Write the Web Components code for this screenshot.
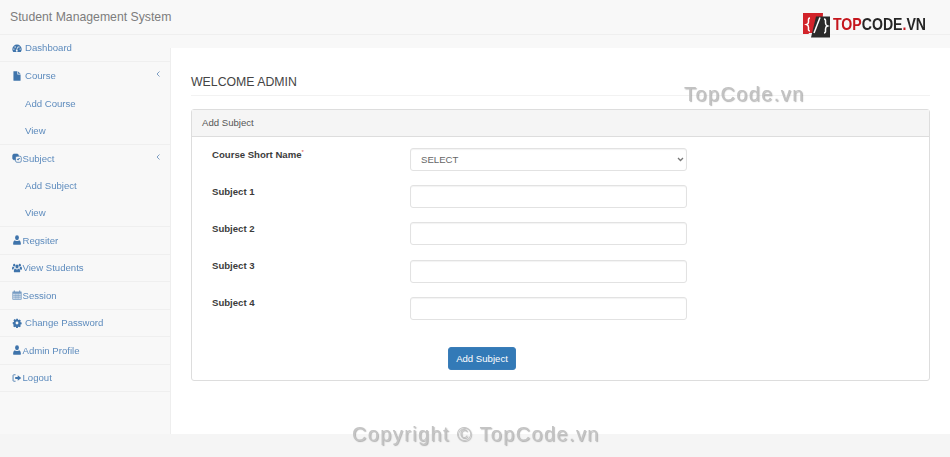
<!DOCTYPE html>
<html lang="en">
<head>
<meta charset="utf-8">
<title>Student Management System</title>
<style>
  html, body { margin: 0; height: 100%; }
  body {
    background: #f8f8f8;
    font-family: "Liberation Sans", Arial, sans-serif;
    font-size: 9.6px;
    color: #333;
    overflow: hidden;
  }
</style>
</head>
<body>
<admin-page>
  <top-bar slot="top" brand="Student Management System"></top-bar>
  <side-nav slot="side">
    <nav-item icon="dashboard" gap="wide" divider>Dashboard</nav-item>
    <nav-item icon="file" gap="wide" caret>Course</nav-item>
    <nav-item sub>Add Course</nav-item>
    <nav-item sub divider>View</nav-item>
    <nav-item icon="clone" caret>Subject</nav-item>
    <nav-item sub>Add Subject</nav-item>
    <nav-item sub divider>View</nav-item>
    <nav-item icon="user" divider>Regsiter</nav-item>
    <nav-item icon="users" divider>View Students</nav-item>
    <nav-item icon="calendar" divider>Session</nav-item>
    <nav-item icon="cog" gap="wide" divider>Change Password</nav-item>
    <nav-item icon="user" divider>Admin Profile</nav-item>
    <nav-item icon="logout" divider>Logout</nav-item>
  </side-nav>
  <form-panel slot="main" heading="WELCOME ADMIN" title="Add Subject">
    <form-row label="Course Short Name" required>
      <select>
        <option>SELECT</option>
      </select>
    </form-row>
    <form-row label="Subject 1"></form-row>
    <form-row label="Subject 2"></form-row>
    <form-row label="Subject 3"></form-row>
    <form-row label="Subject 4"></form-row>
  </form-panel>
</admin-page>

<script>
const ICONS = {
  dashboard: `<svg viewBox="0 0 16 14"><path d="M8 1.500a7.500 7.500 0 0 0-7.500 7.500c0 1.700.6 3.200 1.500 4.500h12c.9-1.300 1.500-2.800 1.500-4.500A7.500 7.500 0 0 0 8 1.500zM3 9.800a1.100 1.100 0 1 1 0-2.200 1.100 1.100 0 0 1 0 2.200zm2-3.300a1.100 1.100 0 1 1 0-2.200 1.100 1.100 0 0 1 0 2.200zm4.300 4.800a1.600 1.600 0 1 1-2.300-1.500l1.700-5 1 .3-1.500 5c.7.200 1.100.6 1.100 1.200zM13 9.800a1.100 1.100 0 1 1 0-2.200 1.100 1.100 0 0 1 0 2.200zm-2-3.300a1.100 1.100 0 1 1 0-2.200 1.100 1.100 0 0 1 0 2.200z" fill-rule="evenodd"/></svg>`,
  file: `<svg viewBox="0 0 14 14"><path d="M2 .5h5.500v4.300h4.500V13a.7.700 0 0 1-.7.700H2.700A.7.700 0 0 1 2 13zM8.500.6 12 3.900H8.500z"/></svg>`,
  clone: `<svg viewBox="0 0 14 14" fill="none" stroke="currentColor" stroke-width="1"><rect x="1" y="1.500" width="8" height="8" rx="2"/><rect x="5" y="4.500" width="8" height="8.500" rx="2" fill="#f8f8f8"/><path d="m7 8.500 1.500 1.500 2.500-3"/></svg>`,
  user: `<svg viewBox="0 0 14 14"><g transform="translate(1.400 0) scale(.8 1)"><circle cx="7" cy="3.800" r="3.400"/><path d="M1 13.500c-.5 0-.8-.3-.8-.8 0-3 1-5.200 3.200-5.500 1 .9 2.200 1.300 3.600 1.300s2.600-.4 3.600-1.300c2.200.3 3.200 2.500 3.200 5.500 0 .5-.3.800-.8.800z"/></g></svg>`,
  users: `<svg viewBox="0 0 18 14" preserveAspectRatio="none"><circle cx="9" cy="5" r="2.800"/><circle cx="4" cy="3" r="2"/><circle cx="14" cy="3" r="2"/><path d="M4 13c-.4 0-.7-.3-.7-.7 0-2.500.8-4.300 2.500-4.500.9.800 2 1.200 3.200 1.200s2.300-.4 3.200-1.200c1.700.2 2.500 2 2.500 4.500 0 .4-.3.700-.7.700zM.5 9c-.3 0-.5-.2-.5-.5 0-2 .6-3.500 1.800-3.600.5.500 1.200.8 1.900.8l.6 1.600C3.200 7 2.700 7.900 2.600 9zM17.500 9c.3 0 .5-.2.500-.5 0-2-.6-3.500-1.800-3.600-.5.500-1.200.8-1.900.8l-.6 1.600c1.100.7 1.600 1.600 1.700 2.700z"/></svg>`,
  calendar: `<svg viewBox="0 0 14 14"><path d="M1.200 2h1.300V.8h1.600V2h5.800V.8h1.600V2h1.300c.4 0 .7.300.7.700V13c0 .4-.3.700-.7.700H1.200c-.4 0-.7-.3-.7-.7V2.700c0-.4.300-.7.700-.7z" opacity=".7"/><path d="M1.700 5.200h10.600v7.300H1.700z" fill="#dfe7f0"/><path d="M4.500 5v7.500M7 5v7.500M9.500 5v7.500M1.700 7.600h10.600M1.700 10.100h10.600" stroke="currentColor" stroke-width=".8" opacity=".7"/></svg>`,
  cog: `<svg viewBox="0 0 14 14"><path fill-rule="evenodd" d="M5.800 1h2.400l.3 1.500 1 .4 1.300-.9 1.700 1.700-.9 1.300.4 1 1.500.3v2.400l-1.500.3-.4 1 .9 1.300-1.700 1.700-1.300-.9-1 .4-.3 1.500H5.800l-.3-1.500-1-.4-1.300.9-1.700-1.700.9-1.300-.4-1L1 8.200V5.800l1.500-.3.4-1-.9-1.300L3.700 1.500l1.300.9 1-.4zM7 5a2 2 0 1 0 0 4 2 2 0 0 0 0-4z"/></svg>`,
  logout: `<svg viewBox="0 0 14 14"><path d="M5 2.500H2.500a1 1 0 0 0-1 1v7a1 1 0 0 0 1 1H5" fill="none" stroke="currentColor" stroke-width="1.200"/><path d="M8 3.200 13 7l-5 3.800V8.500H4.500v-3H8z"/></svg>`,
};

const ARROW = `url("data:image/svg+xml,%3Csvg xmlns='http://www.w3.org/2000/svg' width='7' height='5'%3E%3Cpath d='M1 1l2.500 2.500L6 1' fill='none' stroke='%23777' stroke-width='1.300'/%3E%3C/svg%3E")`;

class AdminPage extends HTMLElement {
  connectedCallback() {
    if (this.shadowRoot) return;
    this.attachShadow({ mode: "open" });
    this.shadowRoot.innerHTML = `
      <style>
        :host { display: block; position: relative; width: 950px; height: 457px; overflow: hidden; }
        .wrap { display: flex; flex-direction: column; height: 100%; filter: blur(.5px); }
        .body { display: flex; }
        .side { flex: 0 0 170px; }
        .main { flex: 1; margin-top: 13.500px; height: 386px; background: #fff; border-left: 1px solid #eee; box-sizing: border-box; padding: 0 20px; }
        .foot { flex: 1; background: #f5f5f5; }
        .mark { position: absolute; white-space: nowrap; filter: blur(.3px); text-shadow: 1px 1px 1px rgba(110,110,110,.5); }
        .mark.one { left: 684px; top: 83px; font-size: 20px; letter-spacing: 1.400px; color: #c2c2c2; }
        .mark.two { left: 352px; top: 423px; font-size: 20px; letter-spacing: 1.360px; color: #c4c4c4; }
      </style>
      <div class="wrap">
        <slot name="top"></slot>
        <div class="body">
          <div class="side"><slot name="side"></slot></div>
          <div class="main"><slot name="main"></slot></div>
        </div>
        <div class="foot"></div>
      </div>
      <div class="mark one">TopCode.vn</div>
      <div class="mark two">Copyright © TopCode.vn</div>
    `;
  }
}

class TopBar extends HTMLElement {
  connectedCallback() {
    if (this.shadowRoot) return;
    this.attachShadow({ mode: "open" });
    this.shadowRoot.innerHTML = `
      <style>
        :host { display: flex; align-items: flex-start; justify-content: space-between; height: 34.500px; box-sizing: border-box; padding: 10px 0 0 10px; background: #f8f8f8; border-bottom: 1px solid #efefef; }
        .brand { font-size: 12.250px; line-height: 14px; color: #7d7d7d; }
        .logo { display: flex; align-items: flex-start; width: 147px; height: 26px; margin-top: 2px; }
        svg { display: block; flex: 0 0 auto; }
        .word { margin: 3px 0 0 3px; font-size: 16.500px; line-height: 19px; font-weight: 700; color: #262626; white-space: nowrap; transform: scaleX(.855); transform-origin: left; width: 93px; }
        .red { color: #c5161d; }
      </style>
      <span class="brand">${this.getAttribute("brand")}</span>
      <div class="logo">
        <svg width="27" height="26" viewBox="0 0 27 26">
          <path d="M0 1h20l-1 20H6l-.5 1H0z" fill="#d2232a"/>
          <path d="M13 4.500h14V25.500H8z" fill="#2b2b2b"/>
          <path d="M7 6C5 6 5.500 8 5.500 10S5 12 3.500 12.500C5 13 5.500 13.500 5.500 15.500S5 19 7 19" fill="none" stroke="#fff" stroke-width="1.500"/>
          <path d="M21 7c2 0 1.500 2 1.500 4s.5 2.500 2 3c-1.500.5-2 1-2 3s.5 4-1.500 4" fill="none" stroke="#fff" stroke-width="1.500"/>
          <path d="M17 5.500 11 21" stroke="#fff" stroke-width="1.500"/>
        </svg>
        <span class="word"><span class="red">TOP</span>CODE<span class="red">.</span>VN</span>
      </div>
    `;
  }
}

class SideNav extends HTMLElement {
  connectedCallback() {
    if (this.shadowRoot) return;
    this.attachShadow({ mode: "open" });
    this.shadowRoot.innerHTML = `
      <style>:host { display: block; }</style>
      <slot></slot>
    `;
  }
}

class NavItem extends HTMLElement {
  connectedCallback() {
    if (this.shadowRoot) return;
    this.attachShadow({ mode: "open" });
    const icon = this.getAttribute("icon");
    const wide = this.getAttribute("gap") === "wide";
    this.shadowRoot.innerHTML = `
      <style>
        :host { display: flex; align-items: center; position: relative; height: 27.500px; box-sizing: border-box; padding-left: ${this.hasAttribute("sub") ? 25 : 11.500}px; color: #5d8bbd; font-size: 9.600px; }
        :host([divider]) { border-bottom: 1px solid #efefef; }
        .icon { flex: 0 0 auto; width: ${wide ? 13.500 : 11}px; height: 10px; color: #3f74ab; display: block; }
        svg { display: block; height: 10px; width: 10px; fill: currentColor; }
        .caret { position: absolute; right: 10px; top: 9px; width: 4px; height: 6px; fill: none; stroke: #7f9fc4; stroke-width: 1; }
      </style>
      ${icon ? `<span class="icon">${ICONS[icon]}</span>` : ""}
      <slot></slot>
      ${this.hasAttribute("caret") ? `<svg class="caret" viewBox="0 0 4 6"><path d="M3.500.5 1 3l2.500 2.500"/></svg>` : ""}
    `;
  }
}

class FormPanel extends HTMLElement {
  connectedCallback() {
    if (this.shadowRoot) return;
    this.attachShadow({ mode: "open" });
    this.shadowRoot.innerHTML = `
      <style>
        :host { display: block; }
        h1 { margin: 0; padding: 27px 0 5px; height: 15px; box-sizing: content-box; font-size: 12.300px; line-height: 15px; font-weight: 400; color: #444; border-bottom: 1px solid #f2f2f2; }
        .panel { margin-top: 13px; height: 272px; box-sizing: border-box; border: 1px solid #ddd; border-radius: 3px; }
        .title { height: 27px; box-sizing: border-box; padding: 0 0 1px 10px; display: flex; align-items: center; background: #f5f5f5; border-bottom: 1px solid #ddd; font-size: 9.600px; color: #555; }
        .rows { display: flex; flex-direction: column; gap: 14.200px; padding: 11px 0 0 20px; }
        .actions { padding: 27px 0 0 256px; }
        button { width: 68px; height: 23px; padding: 0; border: 1px solid #3a7db8; border-radius: 3px; background: #337ab7; color: #fff; font: 9.600px "Liberation Sans", Arial, sans-serif; }
      </style>
      <h1>${this.getAttribute("heading")}</h1>
      <div class="panel">
        <div class="title">${this.getAttribute("title")}</div>
        <div class="rows"><slot></slot></div>
        <div class="actions"><button type="button">Add Subject</button></div>
      </div>
    `;
  }
}

class FormRow extends HTMLElement {
  connectedCallback() {
    if (this.shadowRoot) return;
    this.attachShadow({ mode: "open" });
    // the course row passes its own select, the others just get a text input
    const hasControl = this.children.length > 0;
    this.shadowRoot.innerHTML = `
      <style>
        :host { display: grid; grid-template-columns: 198px 277px; height: 23px; }
        label { font-size: 9.600px; font-weight: 700; color: #3c3c3c; line-height: 11px; padding-top: .6px; }
        sup { color: #d9534f; font-size: 6px; line-height: 0; font-weight: 400; }
        input, ::slotted(select) { box-sizing: border-box; width: 277px; height: 23px; margin: 0; background: #fff; border: 1px solid #e2e2e2; border-radius: 3px; box-shadow: inset 0 1px 1px rgba(0,0,0,.05); font: 9.600px "Liberation Sans", Arial, sans-serif; color: #666; padding: 0 10px 1px; }
        ::slotted(select) { appearance: none; background: #fff ${ARROW} no-repeat right 2.500px center; }
      </style>
      <label>${this.getAttribute("label")}${this.hasAttribute("required") ? "<sup>*</sup>" : ""}</label>
      ${hasControl ? "<slot></slot>" : "<input type='text'>"}
    `;
  }
}

customElements.define("admin-page", AdminPage);
customElements.define("top-bar", TopBar);
customElements.define("side-nav", SideNav);
customElements.define("nav-item", NavItem);
customElements.define("form-panel", FormPanel);
customElements.define("form-row", FormRow);
</script>
</body>
</html>
